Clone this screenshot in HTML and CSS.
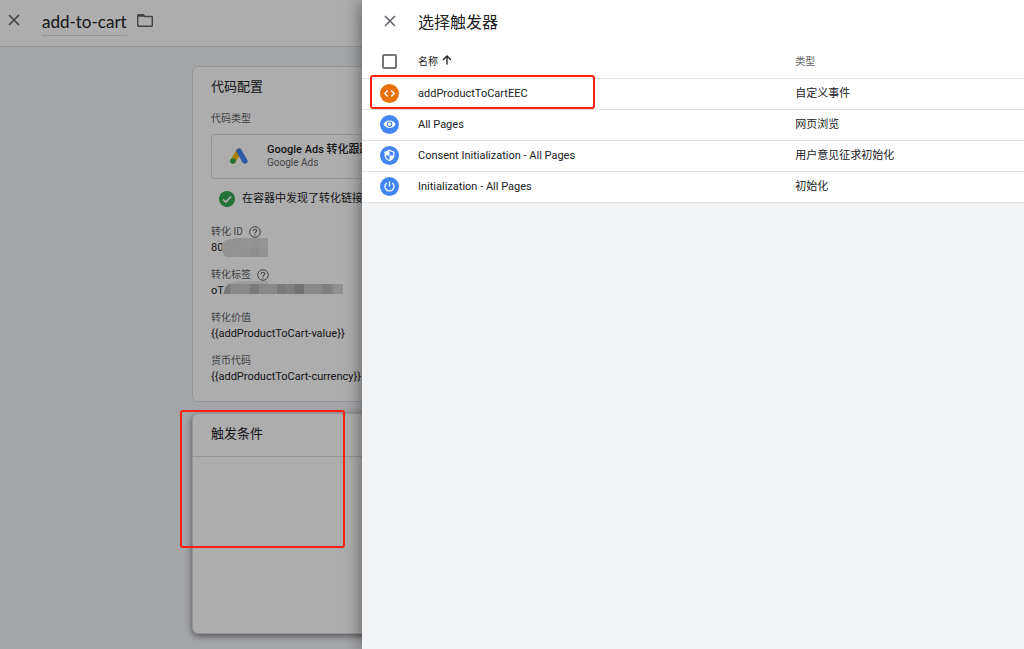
FILE: index.html
```html
<!DOCTYPE html>
<html lang="zh-CN">
<head>
    <meta charset="UTF-8">
    <meta name="viewport" content="width=device-width, initial-scale=1.0">
    <title>add-to-cart</title>
    <link rel="stylesheet" href="styles.css">
</head>
<body>
    <!-- 代码编辑器 -->
    <div class="editor">
        <header class="topbar">
            <button type="button" class="icon-btn" aria-label="关闭">
                <svg width="12" height="12" viewBox="0 0 12 12"><path d="M1 1l10 10M11 1L1 11" stroke="currentColor" stroke-width="1.6" fill="none"/></svg>
            </button>
            <h1 class="tag-name">add-to-cart</h1>
            <button type="button" class="icon-btn" aria-label="文件夹">
                <svg width="16" height="13" viewBox="0 0 16 13"><path d="M.7 1.6v10c0 .4.3.7.7.7h13.2c.4 0 .7-.3.7-.7V3.2c0-.4-.3-.7-.7-.7H7.8L6.3.8H1.4c-.4 0-.7.3-.7.8z" stroke="currentColor" stroke-width="1.4" fill="none"/><path d="M1 .7h5.3l1.7 2H1z" fill="currentColor"/></svg>
            </button>
        </header>

        <main class="content">
            <section class="card">
                <h2>代码配置</h2>
                <div class="label">代码类型</div>
                <div class="tag-type">
                    <svg width="18" height="16" viewBox="0 0 18 16">
                        <path d="M9 3L3.2 12.8" stroke="#fbbc04" stroke-width="5.4" stroke-linecap="round"/>
                        <path d="M9 3l5.8 10" stroke="#4285f4" stroke-width="5.4" stroke-linecap="round"/>
                        <circle cx="3" cy="13" r="2.8" fill="#34a853"/>
                    </svg>
                    <div>
                        <div class="type-name">Google Ads 转化跟踪</div>
                        <div class="type-vendor">Google Ads</div>
                    </div>
                </div>
                <div class="notice">
                    <svg width="16" height="16" viewBox="0 0 16 16"><circle cx="8" cy="8" r="8" fill="#34a853"/><path d="M4 8.3l2.8 2.7L12.2 5.4" stroke="#fff" stroke-width="1.7" fill="none"/></svg>
                    <span>在容器中发现了转化链接器代码</span>
                </div>
                <dl class="fields">
                    <dt>转化 ID
                        <svg width="12" height="12" viewBox="0 0 12 12"><circle cx="6" cy="6" r="5.3" stroke="currentColor" fill="none"/><path d="M4.3 4.9c0-2.2 3.4-2.2 3.4-.2C7.7 5.9 6 6 6 7.4" stroke="currentColor" stroke-width="1.1" fill="none"/><circle cx="6" cy="8.9" r=".7" fill="currentColor"/></svg>
                    </dt>
                    <dd>80
                        <svg class="mask mask-id" width="47" height="19" viewBox="0 0 47 19"><path d="M5 19C-1 14-1 5 5 2l12-2h30v19z" fill="#d7d7d7"/><path d="M20 0h9v10h-9zM38 0h9v10h-9zM11 10h9v9h-9z" fill="#dadada"/><path d="M29 10h9v9h-9z" fill="#d2d2d2"/></svg>
                    </dd>
                    <dt>转化标签
                        <svg width="12" height="12" viewBox="0 0 12 12"><circle cx="6" cy="6" r="5.3" stroke="currentColor" fill="none"/><path d="M4.3 4.9c0-2.2 3.4-2.2 3.4-.2C7.7 5.9 6 6 6 7.4" stroke="currentColor" stroke-width="1.1" fill="none"/><circle cx="6" cy="8.9" r=".7" fill="currentColor"/></svg>
                    </dt>
                    <dd>oTA
                        <svg class="mask mask-label" width="119" height="13" viewBox="0 0 119 13"><path d="M3 3l12-3h29v4H3z" fill="#e6e6e6"/><path d="M0 13C0 8 2 4 6 3h113v10z" fill="#c9c9c9"/><path d="M0 13C0 8 2 4 6 3v10zM26 3h9v10h-9zM53 3h9v10h-9z" fill="#b4b4b4"/><path d="M71 3h9v10h-9z" fill="#a9a9a9"/><path d="M62 3h9v10h-9zM98 3h9v10h-9z" fill="#bcbcbc"/><path d="M110 3h9v10h-9z" fill="#d8d8d8"/></svg>
                    </dd>
                    <dt>转化价值</dt>
                    <dd>{{addProductToCart-value}}</dd>
                    <dt>货币代码</dt>
                    <dd>{{addProductToCart-currency}}</dd>
                </dl>
            </section>

            <section class="card card-trigger">
                <h2>触发条件</h2>
                <div class="trigger-body"></div>
            </section>
        </main>
    </div>

    <div class="scrim"></div>
    <div class="mark mark-trigger"></div>

    <!-- 触发器选择面板 -->
    <aside class="sheet">
        <header class="sheet-header">
            <button type="button" class="icon-btn" aria-label="关闭面板">
                <svg width="12" height="12" viewBox="0 0 12 12"><path d="M1 1l10 10M11 1L1 11" stroke="currentColor" stroke-width="1.5" fill="none"/></svg>
            </button>
            <h2>选择触发器</h2>
        </header>
        <table class="triggers">
            <thead>
                <tr>
                    <th class="col-icon"><input type="checkbox" aria-label="全选"></th>
                    <th class="col-name sorted">名称
                        <svg width="10" height="10" viewBox="0 0 10 10"><path d="M5 9.5V1.2M1 5l4-4 4 4" stroke="currentColor" stroke-width="1.3" fill="none"/></svg>
                    </th>
                    <th>类型</th>
                </tr>
            </thead>
            <tbody>
                <tr>
                    <td class="col-icon">
                        <svg width="19" height="19" viewBox="0 0 19 19"><circle cx="9.5" cy="9.5" r="9.5" fill="#e8710a"/><path d="M7.8 6.5l-3 3 3 3M11.2 6.5l3 3-3 3" stroke="#fff" stroke-width="1.4" fill="none"/></svg>
                        <div class="mark mark-row"></div>
                    </td>
                    <td>addProductToCartEEC</td>
                    <td>自定义事件</td>
                </tr>
                <tr>
                    <td class="col-icon">
                        <svg width="19" height="19" viewBox="0 0 19 19"><circle cx="9.5" cy="9.5" r="9.5" fill="#4285f4"/><path d="M3.5 9.2C5.8 4.2 13.2 4.2 15.5 9.2 13.2 14.2 5.8 14.2 3.5 9.2z" fill="#fff"/><circle cx="9.5" cy="9.2" r="2.2" fill="#fff" stroke="#4285f4" stroke-width="1.2"/></svg>
                    </td>
                    <td>All Pages</td>
                    <td>网页浏览</td>
                </tr>
                <tr>
                    <td class="col-icon">
                        <svg width="19" height="19" viewBox="0 0 19 19"><circle cx="9.5" cy="9.5" r="9.5" fill="#4285f4"/><path d="M9.5 3.6l5 2.1v3.4c0 3-2.1 5.4-5 6.2-2.9-.8-5-3.2-5-6.2V5.7z" fill="#fff"/><path d="M9.5 5v4.5h3.8v-3zM9.5 9.5v4.6c-2-.7-3.5-2.4-3.8-4.6z" fill="#4285f4"/></svg>
                    </td>
                    <td>Consent Initialization - All Pages</td>
                    <td>用户意见征求初始化</td>
                </tr>
                <tr>
                    <td class="col-icon">
                        <svg width="19" height="19" viewBox="0 0 19 19"><circle cx="9.5" cy="9.5" r="9.5" fill="#4285f4"/><path d="M9.5 4.3v5.2M6.7 5.9a4.5 4.5 0 1 0 5.6 0" stroke="#fff" stroke-width="1.3" fill="none"/></svg>
                    </td>
                    <td>Initialization - All Pages</td>
                    <td>初始化</td>
                </tr>
            </tbody>
        </table>
    </aside>
</body>
</html>
```
FILE: styles.css
```css
* {
    margin: 0;
    padding: 0;
    box-sizing: border-box;
}

body {
    font-family: Roboto, "Noto Sans CJK SC", sans-serif;
    font-size: 11px;
    line-height: 16px;
    color: #202124;
    background: #f1f3f6;
    min-height: 100vh;
    overflow: hidden;
}

h1,
h2 {
    font-weight: 400;
}

svg {
    display: block;
    flex: none;
}

.icon-btn {
    display: flex;
    background: none;
    border: none;
    color: #5f6368;
    cursor: pointer;
}

/* 编辑器 */
.topbar {
    display: flex;
    align-items: flex-start;
    height: 47px;
    padding: 8px;
    background: white;
    border-bottom: 1px solid #dadce0;
}

.topbar .icon-btn {
    padding-top: 6px;
}

.tag-name {
    margin: 0 10px 0 22px;
    border-bottom: 1px solid #dadce0;
    font-family: Lato, Roboto, sans-serif;
    font-size: 17px;
    line-height: 27px;
}

.content {
    display: flex;
    flex-direction: column;
    gap: 11px;
    padding: 19px 192px 16px;
    white-space: nowrap;
}

.card {
    padding: 11px 18px 16px;
    background: white;
    border: 1px solid #dadce0;
    border-radius: 6px;
}

.card h2 {
    font-size: 13px;
    line-height: 18px;
}

.label,
.fields dt {
    font-size: 10px;
    color: #5f6368;
}

.label {
    margin-top: 15px;
}

.tag-type {
    display: flex;
    align-items: center;
    gap: 19px;
    height: 45px;
    margin-top: 7px;
    padding: 0 18px 2px;
    border: 1px solid #dadce0;
    border-radius: 3px;
}

.type-name {
    font-weight: 500;
    line-height: 13px;
}

.type-vendor {
    font-size: 10px;
    line-height: 13px;
    color: #5f6368;
}

.notice {
    display: flex;
    align-items: center;
    gap: 7px;
    padding: 12px 8px 17px;
}

.fields dt {
    display: flex;
    align-items: center;
    gap: 6px;
}

.fields dd {
    position: relative;
    margin-bottom: 11px;
}

.fields dd:last-child {
    margin-bottom: 0;
}

.mask {
    position: absolute;
}

.mask-id {
    top: -2px;
    left: 10px;
}

.mask-label {
    top: -2px;
    left: 13px;
}

.card-trigger {
    padding: 0;
    box-shadow: 0 2px 6px rgba(0, 0, 0, 0.5);
}

.card-trigger h2 {
    padding: 11px 18px 13px;
    border-bottom: 1px solid #dadce0;
}

.trigger-body {
    height: 176px;
}

.scrim {
    position: fixed;
    inset: 0;
    background: rgba(0, 0, 0, 0.32);
}

/* 红色标注框 */
.mark {
    position: absolute;
    border: 2px solid #fc2114;
    border-radius: 3px;
    pointer-events: none;
}

.mark-trigger {
    top: 410px;
    left: 180px;
    width: 165px;
    height: 138px;
}

.mark-row {
    top: -4px;
    left: 8px;
    width: 225px;
    height: 34px;
}

/* 选择面板 */
.sheet {
    position: fixed;
    top: 0;
    right: 0;
    bottom: 0;
    left: 362px;
    background: #f1f3f4;
    box-shadow: 0 0 16px rgba(0, 0, 0, 0.5);
}

.sheet-header {
    display: flex;
    align-items: center;
    gap: 22px;
    height: 45px;
    padding: 0 22px;
    background: white;
}

.sheet-header .icon-btn {
    padding-bottom: 4px;
}

.sheet-header h2 {
    font-size: 16px;
    line-height: 24px;
}

.triggers {
    width: 100%;
    table-layout: fixed;
    border-collapse: separate;
    border-spacing: 0;
    background: white;
}

.triggers th,
.triggers td {
    height: 31px;
    border-bottom: 1px solid #e0e2e5;
    text-align: left;
    vertical-align: middle;
}

.triggers th {
    height: 34px;
    font-size: 10px;
    font-weight: 400;
    color: #5f6368;
}

.triggers .sorted {
    color: #202124;
}

.sorted svg {
    display: inline-block;
    margin-left: 2px;
}

.triggers .col-icon {
    position: relative;
    width: 56px;
    padding: 0 0 1px 18px;
}

.triggers .col-name {
    width: 57%;
}

.triggers input {
    display: block;
    appearance: none;
    width: 15px;
    height: 15px;
    margin-left: 2px;
    border: 2px solid #757575;
    border-radius: 2px;
}
```
